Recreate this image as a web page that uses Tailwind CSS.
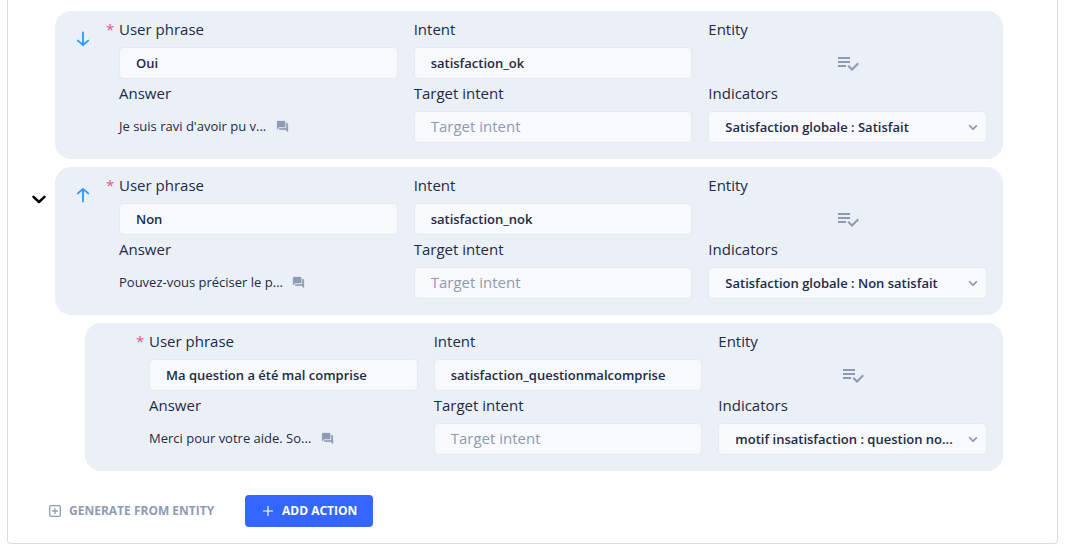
<!DOCTYPE html>
<html lang="en">
<head>
<meta charset="utf-8">
<title>Actions</title>
<script src="https://cdn.jsdelivr.net/npm/@tailwindcss/browser@4"></script>
</head>
<body class="bg-white font-['Open_Sans',sans-serif] text-[#222b45]">
<svg class="hidden">
  <symbol id="arrow" viewBox="0 0 20 20"><path d="M10 3.5v12.3M4.8 11.6l5.2 4.4 5.2-4.4" fill="none" stroke="currentColor" stroke-width="1.85" stroke-linecap="round" stroke-linejoin="round"/></symbol>
  <symbol id="chevron" viewBox="0 0 24 24"><path d="M12 15.5a1 1 0 0 1-.71-.29l-4-4a1 1 0 1 1 1.42-1.42L12 13.1l3.3-3.18a1 1 0 1 1 1.38 1.44l-4 3.86a1 1 0 0 1-.68.28z" fill="currentColor" stroke="currentColor" stroke-width=".2"/></symbol>
  <symbol id="check" viewBox="0 0 24 24"><path d="M14 10H2v2h12v-2zm0-4H2v2h12V6zM2 16h8v-2H2v2zm19.5-4.5L23 13l-6.99 7-4.51-4.5L13 14l3.01 3 5.49-5.5z" fill="currentColor"/></symbol>
  <symbol id="forum" viewBox="0 0 24 24"><path d="M21 6h-2v9H6v2c0 .55.45 1 1 1h11l4 4V7c0-.55-.45-1-1-1zm-4 6V3c0-.55-.45-1-1-1H3c-.55 0-1 .45-1 1v14l4-4h10c.55 0 1-.45 1-1z" fill="currentColor" stroke="currentColor" stroke-width=".6"/></symbol>
</svg>
<main class="ml-[7px] flex h-[544px] w-[1051px] flex-col rounded-b-[4px] border border-t-0 border-[#dadce9] pt-[11px]">
  <div class="flex flex-col gap-2">

    <section class="flex h-[148px]">
      <div class="w-[47px] shrink-0"></div>
      <div class="flex w-[948px] rounded-2xl bg-[#ebf0f7] pt-1 pr-4">
        <div class="flex w-16 shrink-0 pt-[14px] pl-[18px]"><svg class="size-5 text-[#2b9bff]"><use href="#arrow"/></svg></div>
        <div class="grid flex-1 auto-rows-min grid-cols-3 gap-x-4">
          <div>
            <div class="relative h-8 text-[15px] leading-[28px]"><span class="absolute -left-[13px] text-[#e8508a]">*</span>User phrase</div>
            <div class="h-8 rounded-[4px] border border-[#e4e9f2] bg-[#f7f9fc] pl-4 text-[13px] leading-[30px] font-semibold">Oui</div>
          </div>
          <div>
            <div class="h-8 text-[15px] leading-[28px]">Intent</div>
            <div class="h-8 rounded-[4px] border border-[#e4e9f2] bg-[#f7f9fc] pl-4 text-[13px] leading-[30px] font-semibold">satisfaction_ok</div>
          </div>
          <div>
            <div class="h-8 text-[15px] leading-[28px]">Entity</div>
            <div class="flex h-8 items-center justify-center"><svg class="size-6 text-[#8f9bb3]"><use href="#check"/></svg></div>
          </div>
          <div>
            <div class="h-8 text-[15px] leading-[28px]">Answer</div>
            <div class="flex h-[30px] items-center gap-[9.5px] text-[13px] leading-[30px]"><span>Je suis ravi d'avoir pu v...</span><svg class="mt-px size-[13px] text-[#8f9bb3]"><use href="#forum"/></svg></div>
          </div>
          <div>
            <div class="h-8 text-[15px] leading-[28px]">Target intent</div>
            <div class="h-8 rounded-[4px] border border-[#e4e9f2] bg-[#f7f9fc] pl-4 text-[15px] leading-[28px] text-[#8f9bb3]">Target intent</div>
          </div>
          <div>
            <div class="h-8 text-[15px] leading-[28px]">Indicators</div>
            <div class="flex h-8 items-center justify-between rounded-[4px] border border-[#e4e9f2] bg-[#f7f9fc] pr-[3px] pl-4 text-[13px] leading-[30px] font-semibold"><span>Satisfaction globale : Satisfait</span><svg class="size-5 text-[#8f9bb3]"><use href="#chevron"/></svg></div>
          </div>
        </div>
      </div>
    </section>

    <section class="flex h-[148px]">
      <div class="w-[47px] shrink-0 pt-[28px] pl-[24px]"><svg class="h-[9px] w-[14px]" viewBox="0 0 14 9"><path d="M1.5 1.8 7 7l5.5-5.2" fill="none" stroke="#000" stroke-width="2.5" stroke-linecap="round" stroke-linejoin="round"/></svg></div>
      <div class="flex w-[948px] rounded-2xl bg-[#ebf0f7] pt-1 pr-4">
        <div class="flex w-16 shrink-0 pt-[14px] pl-[18px]"><svg class="size-5 rotate-180 text-[#2b9bff]"><use href="#arrow"/></svg></div>
        <div class="grid flex-1 auto-rows-min grid-cols-3 gap-x-4">
          <div>
            <div class="relative h-8 text-[15px] leading-[28px]"><span class="absolute -left-[13px] text-[#e8508a]">*</span>User phrase</div>
            <div class="h-8 rounded-[4px] border border-[#e4e9f2] bg-[#f7f9fc] pl-4 text-[13px] leading-[30px] font-semibold">Non</div>
          </div>
          <div>
            <div class="h-8 text-[15px] leading-[28px]">Intent</div>
            <div class="h-8 rounded-[4px] border border-[#e4e9f2] bg-[#f7f9fc] pl-4 text-[13px] leading-[30px] font-semibold">satisfaction_nok</div>
          </div>
          <div>
            <div class="h-8 text-[15px] leading-[28px]">Entity</div>
            <div class="flex h-8 items-center justify-center"><svg class="size-6 text-[#8f9bb3]"><use href="#check"/></svg></div>
          </div>
          <div>
            <div class="h-8 text-[15px] leading-[28px]">Answer</div>
            <div class="flex h-[30px] items-center gap-[9.5px] text-[13px] leading-[30px]"><span>Pouvez-vous préciser le p...</span><svg class="mt-px size-[13px] text-[#8f9bb3]"><use href="#forum"/></svg></div>
          </div>
          <div>
            <div class="h-8 text-[15px] leading-[28px]">Target intent</div>
            <div class="h-8 rounded-[4px] border border-[#e4e9f2] bg-[#f7f9fc] pl-4 text-[15px] leading-[28px] text-[#8f9bb3]">Target intent</div>
          </div>
          <div>
            <div class="h-8 text-[15px] leading-[28px]">Indicators</div>
            <div class="flex h-8 items-center justify-between rounded-[4px] border border-[#e4e9f2] bg-[#f7f9fc] pr-[3px] pl-4 text-[13px] leading-[30px] font-semibold"><span>Satisfaction globale : Non satisfait</span><svg class="size-5 text-[#8f9bb3]"><use href="#chevron"/></svg></div>
          </div>
        </div>
      </div>
    </section>

    <section class="flex h-[148px]">
      <div class="w-[77px] shrink-0"></div>
      <div class="flex w-[918px] rounded-2xl bg-[#ebf0f7] pt-1 pr-4">
        <div class="w-16 shrink-0"></div>
        <div class="grid flex-1 auto-rows-min grid-cols-3 gap-x-4">
          <div>
            <div class="relative h-8 text-[15px] leading-[28px]"><span class="absolute -left-[13px] text-[#e8508a]">*</span>User phrase</div>
            <div class="h-8 rounded-[4px] border border-[#e4e9f2] bg-[#f7f9fc] pl-4 text-[13px] leading-[30px] font-semibold">Ma question a été mal comprise</div>
          </div>
          <div>
            <div class="h-8 text-[15px] leading-[28px]">Intent</div>
            <div class="h-8 rounded-[4px] border border-[#e4e9f2] bg-[#f7f9fc] pl-4 text-[13px] leading-[30px] font-semibold">satisfaction_questionmalcomprise</div>
          </div>
          <div>
            <div class="h-8 text-[15px] leading-[28px]">Entity</div>
            <div class="flex h-8 items-center justify-center"><svg class="size-6 text-[#8f9bb3]"><use href="#check"/></svg></div>
          </div>
          <div>
            <div class="h-8 text-[15px] leading-[28px]">Answer</div>
            <div class="flex h-[30px] items-center gap-[9.5px] text-[13px] leading-[30px]"><span>Merci pour votre aide. So...</span><svg class="mt-px size-[13px] text-[#8f9bb3]"><use href="#forum"/></svg></div>
          </div>
          <div>
            <div class="h-8 text-[15px] leading-[28px]">Target intent</div>
            <div class="h-8 rounded-[4px] border border-[#e4e9f2] bg-[#f7f9fc] pl-4 text-[15px] leading-[28px] text-[#8f9bb3]">Target intent</div>
          </div>
          <div>
            <div class="h-8 text-[15px] leading-[28px]">Indicators</div>
            <div class="flex h-8 items-center justify-between rounded-[4px] border border-[#e4e9f2] bg-[#f7f9fc] pr-[3px] pl-4 text-[13px] leading-[30px] font-semibold"><span>motif insatisfaction : question no...</span><svg class="size-5 text-[#8f9bb3]"><use href="#chevron"/></svg></div>
          </div>
        </div>
      </div>
    </section>
  </div>

  <div class="mt-6 flex h-8 items-center text-[12px] font-bold">
    <button class="ml-[41px] flex w-[196px] items-center text-[#8f9bb3]">
      <svg class="mr-2 size-3" viewBox="0 0 12 12" fill="none" stroke="currentColor"><rect x=".65" y=".65" width="10.7" height="10.7" rx="1.4" stroke-width="1.3"/><path d="M6 3.6v4.8M3.6 6h4.8" stroke-width="1.3" stroke-linecap="round"/></svg>
      <span>GENERATE FROM ENTITY</span>
    </button>
    <button class="flex h-8 w-32 items-center rounded-[4px] bg-[#3366ff] pl-[18px] text-white">
      <svg class="mr-[9px] size-[10px]" viewBox="0 0 10 10"><path d="M5 .5v9M.5 5h9" stroke="currentColor" stroke-width="1.2" stroke-linecap="round"/></svg>
      <span>ADD ACTION</span>
    </button>
  </div>
</main>
</body>
</html>
